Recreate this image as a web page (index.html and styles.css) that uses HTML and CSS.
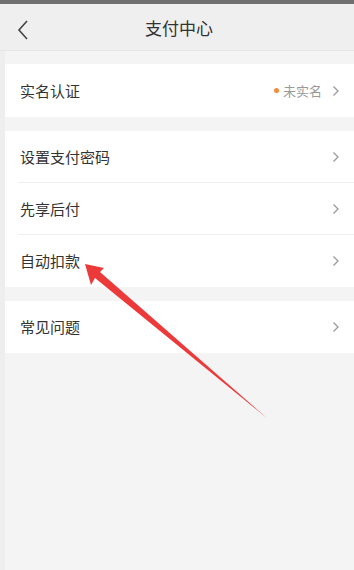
FILE: index.html
```html
<!DOCTYPE html>
<html lang="zh">
<head>
<meta charset="utf-8">
<link rel="stylesheet" href="styles.css">
</head>
<body>
<div class="status"></div>
<div class="page">
  <header class="nav">
    <svg class="back" width="12" height="20" viewBox="0 0 12 20"><path d="M10 1 L2 10 L10 19" fill="none" stroke="#444" stroke-width="1.6"/></svg>
    <div class="title">支付中心</div>
  </header>
  <div class="content">
    <section class="group">
      <div class="row first"><span class="label">实名认证</span><span class="right"><i class="dot"></i><span class="status-text">未实名</span><svg class="chev" width="8" height="12" viewBox="0 0 8 12"><path d="M1.5 1.5 L6 6 L1.5 10.5" fill="none" stroke="#9a9a9a" stroke-width="1.3"/></svg></span></div>
    </section>
    <section class="group">
      <div class="row line"><span class="label">设置支付密码</span><svg class="chev" width="8" height="12" viewBox="0 0 8 12"><path d="M1.5 1.5 L6 6 L1.5 10.5" fill="none" stroke="#9a9a9a" stroke-width="1.3"/></svg></div>
      <div class="row line"><span class="label">先享后付</span><svg class="chev" width="8" height="12" viewBox="0 0 8 12"><path d="M1.5 1.5 L6 6 L1.5 10.5" fill="none" stroke="#9a9a9a" stroke-width="1.3"/></svg></div>
      <div class="row"><span class="label">自动扣款</span><svg class="chev" width="8" height="12" viewBox="0 0 8 12"><path d="M1.5 1.5 L6 6 L1.5 10.5" fill="none" stroke="#9a9a9a" stroke-width="1.3"/></svg></div>
    </section>
    <section class="group">
      <div class="row"><span class="label">常见问题</span><svg class="chev" width="8" height="12" viewBox="0 0 8 12"><path d="M1.5 1.5 L6 6 L1.5 10.5" fill="none" stroke="#9a9a9a" stroke-width="1.3"/></svg></div>
    </section>
  </div>
</div>
<svg class="arrow" width="354" height="570" viewBox="0 0 354 570">
  <polygon points="85,264 104,268 100,272 268,419 95,278 91,285" fill="#ec3a3a"/>
</svg>
</body>
</html>
```
FILE: styles.css
```css
html, body { margin: 0; padding: 0; }
body {
  width: 354px;
  height: 570px;
  overflow: hidden;
  background: #f4f4f4;
  font-family: "Noto Sans CJK SC", "Noto Sans", sans-serif;
  position: relative;
}
.status { height: 4px; background: #707070; }
.page { height: 566px; }
.nav {
  height: 46px;
  background: #efefef;
  border-bottom: 1px solid #e6e6e6;
  display: flex;
  align-items: center;
  justify-content: center;
  position: relative;
}
.back { position: absolute; left: 17px; top: 16px; }
.title { font-size: 17px; color: #333; margin-left: 4px; }
.content {
  margin-left: 5px;
  padding-top: 13px;
  display: flex;
  flex-direction: column;
  gap: 14px;
  box-shadow: -5px 0 0 #eeeeee;
  min-height: 506px;
}
.group { background: #fff; }
.row {
  height: 52px;
  display: flex;
  align-items: center;
  justify-content: space-between;
  padding: 0 14px 0 15px;
  position: relative;
}
.row.first { height: 53px; }
.row.line::after {
  content: "";
  position: absolute;
  left: 13px; right: 0; bottom: 0;
  height: 1px;
  background: #eeeeee;
}
.label { font-size: 15px; color: #333; margin-top: -1px; }
.right { display: flex; align-items: center; }
.dot { width: 5px; height: 5px; border-radius: 50%; background: #f08a3c; margin-right: 4px; }
.status-text { font-size: 13px; color: #999; margin-right: 10px; }
.chev { display: block; }
.arrow { position: absolute; left: 0; top: 0; pointer-events: none; }
```
